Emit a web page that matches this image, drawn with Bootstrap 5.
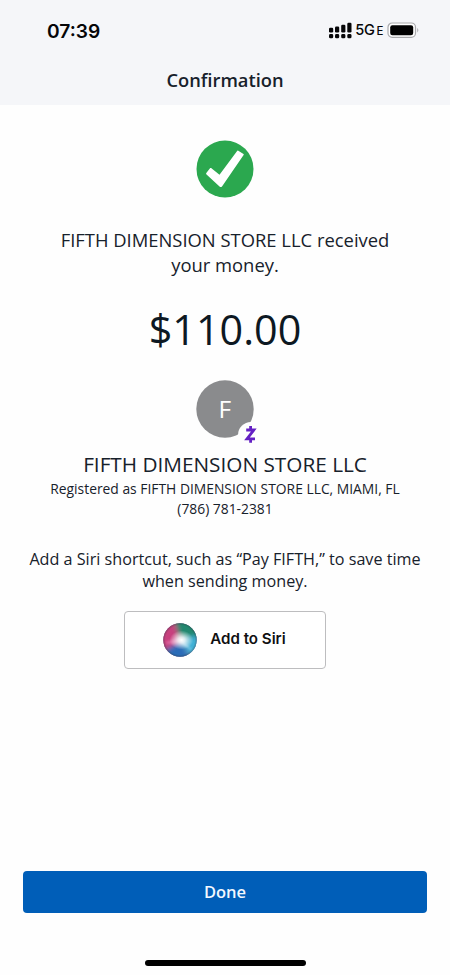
<!DOCTYPE html>
<html lang="en">
<head>
<meta charset="utf-8">
<meta name="viewport" content="width=device-width, initial-scale=1">
<title>Confirmation</title>
<link rel="stylesheet" href="https://cdn.jsdelivr.net/npm/bootstrap@5.3.0/dist/css/bootstrap.min.css">
<style>
  body { font-family: "Open Sans", sans-serif; color: #17212b; background: #fefefe; }
  .screen { height: 975px; overflow: hidden; }
  .top-area { height: 105px; background: #f5f6f9; }
  .status-bar { height: 60px; padding: 1px 30px 0 47px; font-family: Inter, sans-serif; color: #060608; }
  .clock { font-size: 19.2px; font-weight: 600; line-height: 60px; }
  .network { font-size: 14.6px; font-weight: 500; line-height: 60px; letter-spacing: -.4px; }
  .network small { font-size: 11.5px; margin-left: 2px; }
  .screen-title { font-size: 18.3px; font-weight: 600; line-height: 40px; }
  .result-icon { margin-top: 35px; }
  .received { margin-top: 29px; font-size: 18.4px; line-height: 25px; }
  .amount { margin-top: 22px; font-size: 41.3px; line-height: 60px; color: #0d1822; }
  .avatar { margin-top: 21px; }
  .payee { margin-top: 6px; font-size: 20.75px; line-height: 29px; }
  .registered { font-size: 13.85px; line-height: 20px; }
  .siri-hint { margin-top: 29px; font-size: 16.16px; line-height: 22px; }
  .siri-btn { margin-top: 19px; width: 202px; height: 58px; border: 1.5px solid #bdbdbf; border-radius: 4px; background: #fff; font-family: Inter, sans-serif; font-size: 15.1px; font-weight: 600; color: #101012; padding: 0 2px 1px 0; }
  .done-btn { margin: 0 23px; height: 42px; border-radius: 4px; background: #005eb8; color: #f2f8ff; font-size: 16.5px; font-weight: 600; line-height: 42px; }
  .home-bar { width: 161px; height: 6px; margin-top: 47px; margin-bottom: 9px; background: #000; }
</style>
<script src="https://cdn.jsdelivr.net/npm/bootstrap@5.3.0/dist/js/bootstrap.bundle.min.js"></script>
</head>
<body>
<div class="screen d-flex flex-column">
  <header class="top-area flex-shrink-0">
    <div class="status-bar d-flex align-items-center justify-content-between">
      <span class="clock">07:39</span>
      <div class="d-flex align-items-center">
        <svg width="27" height="20" viewBox="0 0 27 20" fill="#060608">
          <rect x="1" y="6.700" width="4.200" height="4.800" rx="1.200"/><rect x="7" y="5.500" width="4.200" height="6" rx="1.200"/>
          <rect x="13.200" y="3.700" width="4.200" height="7.800" rx="1.200"/><rect x="19.300" y="1.700" width="4.200" height="9.800" rx="1.200"/>
          <rect x="1" y="13.100" width="4.200" height="4.200" rx="1.400"/><rect x="7" y="13.100" width="4.200" height="4.200" rx="1.400"/>
          <rect x="13.200" y="13.100" width="4.200" height="4.200" rx="1.400"/><rect x="19.300" y="13.100" width="4.200" height="4.200" rx="1.400"/>
        </svg>
        <span class="network">5G<small>E</small></span>
        <svg class="ms-1" width="33" height="18" viewBox="0 0 33 18">
          <rect x="1" y="1" width="27.500" height="14.400" rx="4.200" fill="#fff" stroke="#a9a9ac" stroke-width="1.200"/>
          <rect x="3.200" y="3.200" width="23" height="10" rx="2.200" fill="#000"/>
          <path d="M30.300 6q2 2.200 0 4.400z" fill="#a0a0a4"/>
        </svg>
      </div>
    </div>
    <h1 class="screen-title text-center m-0">Confirmation</h1>
  </header>

  <main class="flex-grow-1 d-flex flex-column align-items-center text-center">
    <svg class="result-icon flex-shrink-0" width="58" height="58" viewBox="0 0 58 58">
      <circle cx="29" cy="29" r="28.500" fill="#2ba84f"/>
      <path d="M10.300 33 14.200 28.100Q14.600 27.700 15.100 28.100L23.500 34.800 41.300 10.800Q41.700 10.300 42.300 10.700L47.500 14.100Q48 14.500 47.600 15L26 46.400Q25 47.600 23.800 46.700L10.500 34.600Q9.700 33.800 10.300 33Z" fill="#fff"/>
    </svg>
    <p class="received mb-0">FIFTH DIMENSION STORE LLC received<br>your money.</p>
    <div class="amount">$110.00</div>
    <svg class="avatar flex-shrink-0" width="72" height="64" viewBox="0 0 72 64">
      <circle cx="36" cy="29" r="28.700" fill="#8a8b8d"/>
      <circle cx="62" cy="55" r="13" fill="#fefefe"/>
      <text x="35.800" y="38" text-anchor="middle" font-size="24.500" fill="#fff">F</text>
      <path d="M57.200 50H64.800L58 58.800H66M61.600 46V50M61.600 59V62.800" fill="none" stroke="#6420c4" stroke-width="2.800"/>
    </svg>
    <h2 class="payee fw-normal mb-0">FIFTH DIMENSION STORE LLC</h2>
    <div class="registered">Registered as FIFTH DIMENSION STORE LLC, MIAMI, FL<br>(786) 781-2381</div>
    <p class="siri-hint mb-0">Add a Siri shortcut, such as “Pay FIFTH,” to save time<br>when sending money.</p>
    <button type="button" class="siri-btn d-flex align-items-center justify-content-center">
      <svg class="me-2" width="36" height="36" viewBox="0 0 36 36">
        <defs>
          <clipPath id="orb"><circle cx="18" cy="18" r="16.700"/></clipPath>
          <filter id="soft" x="-50%" y="-50%" width="200%" height="200%"><feGaussianBlur stdDeviation="2.500"/></filter>
          <filter id="haze"><feGaussianBlur stdDeviation=".9"/></filter>
          <radialGradient id="glow"><stop offset="0" stop-color="#fff"/><stop offset=".3" stop-color="#fff" stop-opacity=".8"/><stop offset="1" stop-color="#fff" stop-opacity="0"/></radialGradient>
          <radialGradient id="rim"><stop offset=".85" stop-color="#243" stop-opacity="0"/><stop offset="1" stop-color="#334" stop-opacity=".4"/></radialGradient>
        </defs>
        <g clip-path="url(#orb)">
          <rect width="36" height="36" fill="#7d6a9c"/>
          <g filter="url(#soft)">
            <path d="M18 18 12-4H40V16Z" fill="#20886f"/>
            <path d="M18 18 12-2-4 2V28L6 30Z" fill="#c8407e"/>
            <path d="M18 18 40 12V32L28 34Z" fill="#40b0d6"/>
            <path d="M18 19 30 40H8L2 29Z" fill="#2a6cb8"/>
          </g>
          <g filter="url(#haze)">
            <path d="M18 18Q8 16 3 21 12 25 18 18Z" fill="#f08abb" opacity=".5"/>
            <path d="M18 18Q20 24 31 29 24 20 18 18Z" fill="#bfe6fa" opacity=".5"/>
          </g>
          <ellipse cx="19.500" cy="18" rx="12" ry="9.500" fill="url(#glow)"/>
          <circle cx="18" cy="18" r="17" fill="url(#rim)"/>
        </g>
      </svg>
      <span class="ms-1">Add to Siri</span>
    </button>
  </main>

  <footer class="flex-shrink-0 d-flex flex-column">
    <button type="button" class="done-btn btn border-0 p-0">Done</button>
    <div class="home-bar rounded-pill align-self-center"></div>
  </footer>
</div>
</body>
</html>
